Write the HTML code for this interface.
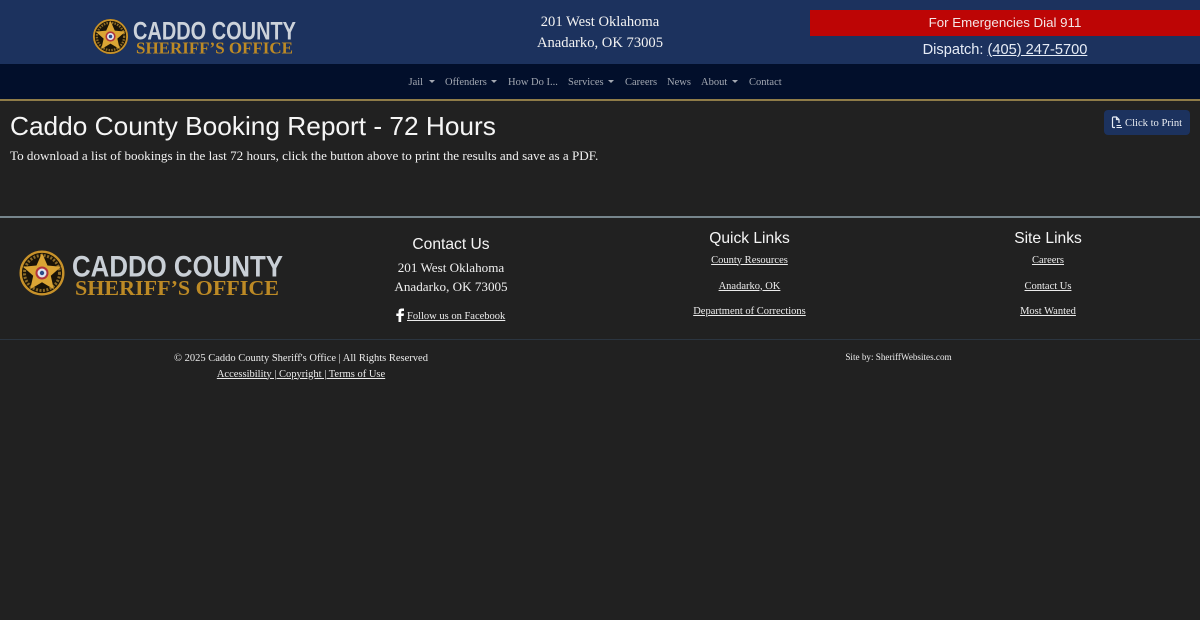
<!DOCTYPE html>
<html lang="en"><head><meta charset="utf-8"><title>Caddo County Booking Report</title>
<style>
html,body{margin:0;padding:0;background:#212121;width:1200px;height:620px;overflow:hidden}
body{position:relative;font-family:"Liberation Serif",serif;color:#fff}
.a{position:absolute;white-space:nowrap}
.c{text-align:center}
a{color:inherit}
.s{font-family:"Liberation Sans",sans-serif}
.nav span{position:absolute;top:75.500px;font-size:10.500px;line-height:14px;color:#a3a8b2;white-space:nowrap}
.caret{position:absolute;top:80px;width:0;height:0;border-left:3.5px solid transparent;border-right:3.5px solid transparent;border-top:3.5px solid #a3a8b2}
.l{left:600px;width:299px;font-size:10.500px;line-height:14px;color:#ececec}
.r{left:898px;width:300px;font-size:10.500px;line-height:14px;color:#ececec}
</style></head><body>
<div class="a" style="left:0;top:0;width:1200px;height:64px;background:#1c325e"></div>
<div class="a" style="left:0;top:64px;width:1200px;height:35px;background:#020f2b"></div>
<div class="a" style="left:0;top:99px;width:1200px;height:2px;background:#8f7c48"></div>

<svg class="a" style="left:92px;top:18px" width="210" height="40" viewBox="0 0 210 40">
<g transform="translate(18.500 18.500) scale(.78)">
<circle r="22.500" fill="#1a1408"/><circle r="21.300" fill="none" stroke="#c8922a" stroke-width="2.400"/>
<circle r="17.500" fill="none" stroke="#8a6a28" stroke-width="3" stroke-dasharray="2 1.500"/>
<polygon points="0,-20 5.500,-7.500 19,-6.200 8.800,2.800 11.800,16.200 0,9.200 -11.800,16.200 -8.800,2.800 -19,-6.200 -5.500,-7.500" fill="#dba534"/>
<circle r="6.500" fill="#b0343c"/><circle r="4.500" fill="#dfe4ee"/><circle r="2.200" fill="#2c4a86"/>
</g>
<text x="41" y="21.500" font-family="Liberation Sans" font-weight="700" font-size="25" fill="#ccd2da" textLength="163" lengthAdjust="spacingAndGlyphs">CADDO COUNTY</text>
<text x="44" y="35.500" font-family="Liberation Serif" font-weight="700" font-size="16.500" fill="#bd8a25" textLength="157" lengthAdjust="spacingAndGlyphs">SHERIFF’S OFFICE</text>
</svg>

<div class="a c" style="left:450px;width:300px;top:11.500px;font-size:14.600px;line-height:21.500px;color:#f2f2f2">201 West Oklahoma<br>Anadarko, OK 73005</div>

<div class="a c s" style="left:810px;top:10px;width:390px;height:26px;background:#bd0505;font-size:13.300px;line-height:26px;color:#f4e6e6">For Emergencies Dial 911</div>
<div class="a c s" style="left:810px;top:40.500px;width:390px;font-size:14.600px;line-height:19px;color:#e6ecf6">Dispatch: <a href="#">(405) 247-5700</a></div>

<div class="nav">
<span style="left:408.500px">Jail</span><i class="caret" style="left:428.500px"></i>
<span style="left:445px">Offenders</span><i class="caret" style="left:491px"></i>
<span style="left:508px">How Do I...</span>
<span style="left:568px">Services</span><i class="caret" style="left:608px"></i>
<span style="left:625px">Careers</span>
<span style="left:667px">News</span>
<span style="left:701px">About</span><i class="caret" style="left:732px"></i>
<span style="left:749px">Contact</span>
</div>

<div class="a s" style="left:10px;top:108.500px;font-size:26.250px;line-height:34px;color:#f5f5f5">Caddo County Booking Report - 72 Hours</div>
<div class="a" style="left:10px;top:147px;font-size:13.125px;line-height:18px;color:#f0f0f0">To download a list of bookings in the last 72 hours, click the button above to print the results and save as a PDF.</div>

<div class="a" style="left:1104px;top:110px;width:86px;height:25px;background:#1c325e;border-radius:4px"></div>
<svg class="a" style="left:1111px;top:116px" width="12" height="13" viewBox="0 0 12 13" fill="none" stroke="#e8edf5" stroke-width="1.200"><path d="M8 7V3.500L5.500 1H2.500Q1.500 1 1.500 2V10.500Q1.500 11.500 2.500 11.500H4"/><path d="M5.500 1V3.500H8"/><path d="M5.500 11.500H11M5.500 9.500H10" stroke-width="1"/></svg>
<div class="a" style="left:1125px;top:116px;font-size:10.600px;line-height:15px;color:#e8ebf0">Click to Print</div>

<div class="a" style="left:0;top:216px;width:1200px;height:2px;background:#76858c"></div>

<svg class="a" style="left:18px;top:249px" width="270" height="50" viewBox="0 0 270 50">
<g transform="translate(24 24)">
<circle r="22.500" fill="#1a1408"/><circle r="21.300" fill="none" stroke="#c8922a" stroke-width="2.400"/>
<circle r="17.500" fill="none" stroke="#8a6a28" stroke-width="3" stroke-dasharray="2 1.500"/>
<polygon points="0,-20 5.500,-7.500 19,-6.200 8.800,2.800 11.800,16.200 0,9.200 -11.800,16.200 -8.800,2.800 -19,-6.200 -5.500,-7.500" fill="#dba534"/>
<circle r="6.500" fill="#b0343c"/><circle r="4.500" fill="#dfe4ee"/><circle r="2.200" fill="#2c4a86"/>
</g>
<text x="54" y="27.500" font-family="Liberation Sans" font-weight="700" font-size="30" fill="#c9cfd6" textLength="211" lengthAdjust="spacingAndGlyphs">CADDO COUNTY</text>
<text x="57" y="46" font-family="Liberation Serif" font-weight="700" font-size="21" fill="#bd8a25" textLength="204" lengthAdjust="spacingAndGlyphs">SHERIFF’S OFFICE</text>
</svg>

<div class="a c s" style="left:301px;width:300px;top:234.500px;font-size:15.600px;line-height:20px;color:#f5f5f5">Contact Us</div>
<div class="a c" style="left:301px;width:300px;top:258px;font-size:13.125px;line-height:19.250px;color:#f0f0f0">201 West Oklahoma<br>Anadarko, OK 73005</div>
<svg class="a" style="left:396px;top:308px" width="9" height="14" viewBox="0 0 9 14"><path d="M2.500 14V8H0.300V5.500H2.500V3.500Q2.500 0.500 5.500 0.500H8V3H6.200Q5.200 3 5.200 4V5.500H8L7.600 8H5.200V14Z" fill="#fff"/></svg>
<div class="a" style="left:407px;top:309px;font-size:10.500px;line-height:15px;color:#ececec"><a href="#">Follow us on Facebook</a></div>

<div class="a c s" style="left:600px;width:299px;top:229px;font-size:15.600px;line-height:20px;color:#f5f5f5">Quick Links</div>
<div class="a c l" style="top:253.500px"><a href="#">County Resources</a></div>
<div class="a c l" style="top:279.500px"><a href="#">Anadarko, OK</a></div>
<div class="a c l" style="top:305px"><a href="#">Department of Corrections</a></div>

<div class="a c s" style="left:898px;width:300px;top:229px;font-size:15.600px;line-height:20px;color:#f5f5f5">Site Links</div>
<div class="a c r" style="top:253.500px"><a href="#">Careers</a></div>
<div class="a c r" style="top:279.500px"><a href="#">Contact Us</a></div>
<div class="a c r" style="top:305px"><a href="#">Most Wanted</a></div>

<div class="a" style="left:0;top:339px;width:1200px;height:1px;background:#2b3540"></div>

<div class="a c" style="left:0;width:602px;top:350.500px;font-size:10.500px;line-height:16px;color:#ececec">© 2025 Caddo County Sheriff's Office | All Rights Reserved<br><a href="#">Accessibility | Copyright | Terms of Use</a></div>
<div class="a c" style="left:698px;width:401px;top:350.500px;font-size:9.150px;line-height:13px;color:#ececec">Site by: SheriffWebsites.com</div>
</body></html>
